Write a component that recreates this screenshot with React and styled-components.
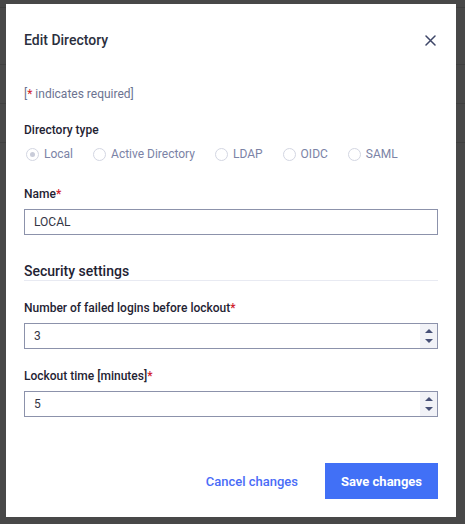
import React from "react";
import styled, { createGlobalStyle } from "styled-components";

const GlobalStyle = createGlobalStyle`
  html, body {
    margin: 0;
    padding: 0;
    background: #484848;
  }
  body {
    font-family: Roboto, "Liberation Sans", sans-serif;
    -webkit-font-smoothing: antialiased;
  }
`;

const Backdrop = styled.div`
  width: 465px;
  height: 524px;
  overflow: hidden;
  background: #484848;
  padding-top: 7px;
  box-sizing: border-box;
`;

const BackRow = styled.div`
  height: ${(p) => p.$h}px;
  border-top: 1px solid #3f3f3f;
`;

const Modal = styled.div`
  position: fixed;
  left: 6px;
  top: 4px;
  width: 450px;
  height: 513px;
  box-sizing: border-box;
  background: #ffffff;
  padding: 26px 18px 0;
  display: flex;
  flex-direction: column;
`;

const Header = styled.div`
  display: flex;
  align-items: center;
  justify-content: space-between;
  height: 20px;
`;

const Title = styled.h2`
  margin: 0;
  font-size: 14px;
  font-weight: 500;
  line-height: 20px;
  color: #2b2f3e;
`;

const CloseButton = styled.button`
  border: 0;
  background: none;
  padding: 0;
  width: 20px;
  height: 20px;
  margin-right: -2px;
  display: flex;
  align-items: center;
  justify-content: center;
  cursor: pointer;
`;

const Note = styled.p`
  margin: 36px 0 0;
  font-size: 12px;
  line-height: 16px;
  color: #6c7391;
`;

const Star = styled.span`
  color: #d0202b;
`;

const Label = styled.label`
  display: block;
  font-size: 12px;
  font-weight: 500;
  line-height: 16px;
  color: #1f2333;
  margin-bottom: ${(p) => p.$mb || 7}px;
`;

const Group = styled.div`
  margin-top: ${(p) => p.$mt}px;
`;

const RadioRow = styled.div`
  display: flex;
  align-items: center;
  gap: 20px;
  padding-left: 2px;
  height: 16px;
`;

const RadioItem = styled.span`
  display: flex;
  align-items: center;
  gap: 5px;
  font-size: 12px;
  color: #7b83a6;
`;

const RadioCircle = styled.span`
  width: 13px;
  height: 13px;
  box-sizing: border-box;
  border-radius: 50%;
  border: 1px solid #d3d6e2;
  display: flex;
  align-items: center;
  justify-content: center;
  &::after {
    content: "";
    width: 5px;
    height: 5px;
    border-radius: 50%;
    background: ${(p) => (p.$checked ? "#c9ccd9" : "transparent")};
  }
`;

const InputBox = styled.div`
  height: 26px;
  box-sizing: border-box;
  border: 1px solid #8c92ab;
  display: flex;
  align-items: stretch;
`;

const InputText = styled.span`
  flex: 1;
  display: flex;
  align-items: center;
  padding-left: 9px;
  font-size: 12px;
  color: #333645;
`;

const Spinner = styled.span`
  width: 17px;
  background: #f1f2f7;
  display: flex;
  flex-direction: column;
  align-items: center;
  justify-content: center;
  gap: 6px;
`;

const Arrow = styled.span`
  width: 0;
  height: 0;
  border-left: 4px solid transparent;
  border-right: 4px solid transparent;
  ${(p) =>
    p.$down
      ? "border-top: 4px solid #475077;"
      : "border-bottom: 4px solid #475077;"}
`;

const SectionTitle = styled.h3`
  margin: 27px 0 0;
  font-size: 14px;
  font-weight: 500;
  line-height: 18px;
  color: #1f2333;
  border-bottom: 1px solid #e8eaf2;
`;

const Footer = styled.div`
  margin-top: 46px;
  display: flex;
  justify-content: flex-end;
  align-items: center;
  gap: 15px;
`;

const TextButton = styled.button`
  border: 0;
  background: none;
  height: 36px;
  padding: 0 12px;
  font-family: inherit;
  font-size: 13px;
  font-weight: 500;
  color: #4a6cf7;
  cursor: pointer;
`;

const PrimaryButton = styled.button`
  border: 0;
  background: #4170f6;
  height: 36px;
  width: 113px;
  padding: 0;
  font-family: inherit;
  font-size: 13px;
  font-weight: 700;
  color: #ffffff;
  cursor: pointer;
`;

function NumberInput({ value }) {
  return (
    <InputBox>
      <InputText>{value}</InputText>
      <Spinner>
        <Arrow />
        <Arrow $down />
      </Spinner>
    </InputBox>
  );
}

const types = ["Local", "Active Directory", "LDAP", "OIDC", "SAML"];
const backRows = [56, 38, 38, 400];

export default function App() {
  return (
    <>
      <GlobalStyle />
      <Backdrop>
        {backRows.map((h, i) => (
          <BackRow key={i} $h={h} />
        ))}
      </Backdrop>
      <Modal>
        <Header>
          <Title>Edit Directory</Title>
          <CloseButton aria-label="Close">
            <svg width="11" height="11" viewBox="0 0 11 11">
              <path
                d="M1 1 L10 10 M10 1 L1 10"
                stroke="#3e4668"
                strokeWidth="1.5"
                strokeLinecap="round"
              />
            </svg>
          </CloseButton>
        </Header>

        <Note>
          [<Star>*</Star> indicates required]
        </Note>

        <Group $mt={20}>
          <Label $mb={8}>Directory type</Label>
          <RadioRow>
            {types.map((t, i) => (
              <RadioItem key={t}>
                <RadioCircle $checked={i === 0} />
                {t}
              </RadioItem>
            ))}
          </RadioRow>
        </Group>

        <Group $mt={24}>
          <Label>
            Name<Star>*</Star>
          </Label>
          <InputBox>
            <InputText>LOCAL</InputText>
          </InputBox>
        </Group>

        <SectionTitle>Security settings</SectionTitle>

        <Group $mt={19}>
          <Label>
            Number of failed logins before lockout<Star>*</Star>
          </Label>
          <NumberInput value="3" />
        </Group>

        <Group $mt={19}>
          <Label>
            Lockout time [minutes]<Star>*</Star>
          </Label>
          <NumberInput value="5" />
        </Group>

        <Footer>
          <TextButton>Cancel changes</TextButton>
          <PrimaryButton>Save changes</PrimaryButton>
        </Footer>
      </Modal>
    </>
  );
}
